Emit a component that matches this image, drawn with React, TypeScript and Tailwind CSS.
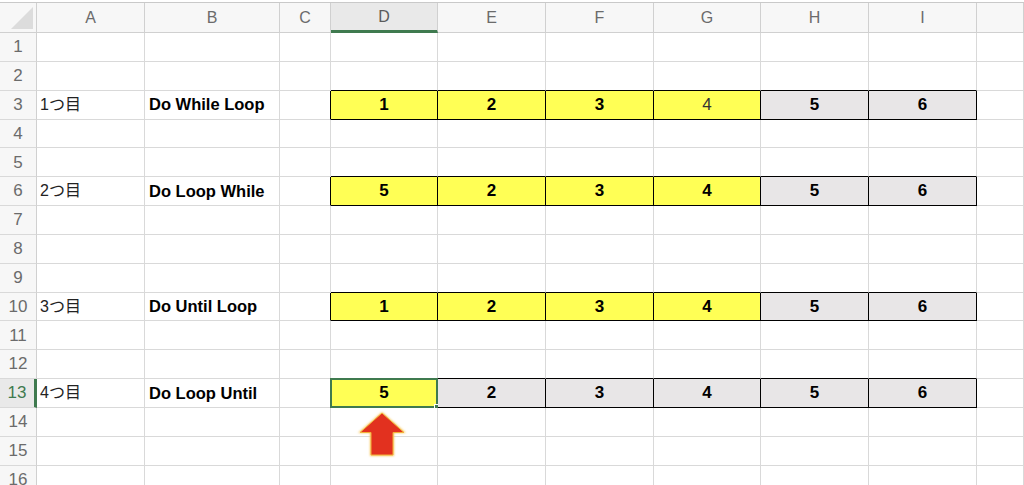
import React from "react";

const COLS = ["A", "B", "C", "D", "E", "F", "G", "H", "I", ""];
const WIDTHS = "37px 108px 135px 51px 107px 108px 108px 107px 108px 108px 47px";

type Row = { label?: string; name?: string; values?: string[]; yellow?: number };

const ROWS: Record<number, Row> = {
  3: { label: "1つ目", name: "Do While Loop", values: ["1", "2", "3", "4", "5", "6"], yellow: 4 },
  6: { label: "2つ目", name: "Do Loop While", values: ["5", "2", "3", "4", "5", "6"], yellow: 4 },
  10: { label: "3つ目", name: "Do Until Loop", values: ["1", "2", "3", "4", "5", "6"], yellow: 4 },
  13: { label: "4つ目", name: "Do Loop Until", values: ["5", "2", "3", "4", "5", "6"], yellow: 1 },
};

const font = { fontFamily: '"Liberation Sans", "Noto Sans CJK JP", sans-serif' };

function UpArrow() {
  return (
    <svg width="54" height="50" viewBox="0 0 54 50" className="absolute left-[355px] top-[409px]">
      <defs>
        <filter id="glow" x="-20%" y="-20%" width="140%" height="140%">
          <feGaussianBlur stdDeviation="1.2" />
        </filter>
      </defs>
      <polygon points="27,3 51,24 39,24 39,47 15,47 15,24 3,24" fill="#f7c85a" filter="url(#glow)" />
      <polygon points="27,4 49,23.5 38,23.5 38,46 16,46 16,23.5 5,23.5" fill="#e2311f" stroke="#f2b13a" strokeWidth="1" />
    </svg>
  );
}

function Cell({ r, c }: { r: number; c: number }) {
  // c: 0 = A ... 8 = I, 9 = spare column
  const row = ROWS[r];
  const next = ROWS[r + 1];
  const inRange = c >= 3 && c <= 8;
  const right = row && c >= 2 && c <= 8 ? "border-r-black" : "border-r-[#d9d9d9]";
  const bottom = inRange && (row || next) ? "border-b-black" : "border-b-[#d9d9d9]";
  let bg = "bg-white";
  let text = "";
  let cls = "";
  if (row) {
    if (c === 0) {
      text = row.label!;
      cls = "pl-[3px] text-[16px] text-[#222]";
    } else if (c === 1) {
      text = row.name!;
      cls = "pl-[4px] text-[16.5px] font-bold text-black";
    } else if (inRange) {
      const i = c - 3;
      text = row.values![i];
      bg = i < row.yellow! ? "bg-[#ffff55]" : "bg-[#e8e6e7]";
      const plain = r === 3 && i === 3;
      cls = `justify-center text-[17px] ${plain ? "font-normal text-[#333]" : "font-bold text-black"}`;
    }
  }
  const selected = r === 13 && c === 3;
  return (
    <div className={`relative flex items-center border-r border-b ${right} ${bottom} ${bg} ${cls}`}>
      {text}
      {selected && (
        <div className="absolute -left-[1px] -top-[1px] -right-[1px] -bottom-[1px] border-2 border-[#3f7a4f]">
          <div className="absolute -right-[4px] -bottom-[4px] h-[6px] w-[6px] bg-[#3f7a4f] border border-white" />
        </div>
      )}
    </div>
  );
}

export default function App() {
  const rows = Array.from({ length: 16 }, (_, i) => i + 1);
  return (
    <div className="relative w-[1024px] h-[485px] overflow-hidden bg-white pt-[2px]" style={font}>
      <div className="border-t border-[#c9c9c9]">
        <div className="grid h-[30px]" style={{ gridTemplateColumns: WIDTHS }}>
          <div className="flex items-end justify-end p-[3px] border-r border-b border-[#d0d0d0] bg-[#f7f7f7]">
            <div className="h-0 w-0 border-solid border-l-[22px] border-b-[22px] border-l-transparent border-b-[#dcdcdc]" />
          </div>
          {COLS.map((c, i) => (
            <div
              key={i}
              className={`flex items-center justify-center text-[16px] ${
                c === "D"
                  ? "bg-[#e9e9e9] text-[#5b5b5b] border-b-[3px] border-b-[#3f7a4f] border-r border-r-[#d0d0d0]"
                  : "bg-[#f7f7f7] text-[#6b6b6b] border-b border-r border-[#d0d0d0]"
              }`}
            >
              {c}
            </div>
          ))}
        </div>
        {rows.map((r) => (
          <div key={r} className="grid h-[28.85px]" style={{ gridTemplateColumns: WIDTHS }}>
            <div
              className={`flex items-center justify-center text-[17px] border-b border-b-[#d9d9d9] ${
                r === 13
                  ? "bg-[#e9e9e9] text-[#3f7a4f] border-r-[3px] border-r-[#3f7a4f]"
                  : "bg-[#f7f7f7] text-[#6b6b6b] border-r border-r-[#d0d0d0]"
              }`}
            >
              {r}
            </div>
            {COLS.map((_, c) => (
              <Cell key={c} r={r} c={c} />
            ))}
          </div>
        ))}
      </div>
      <UpArrow />
    </div>
  );
}
